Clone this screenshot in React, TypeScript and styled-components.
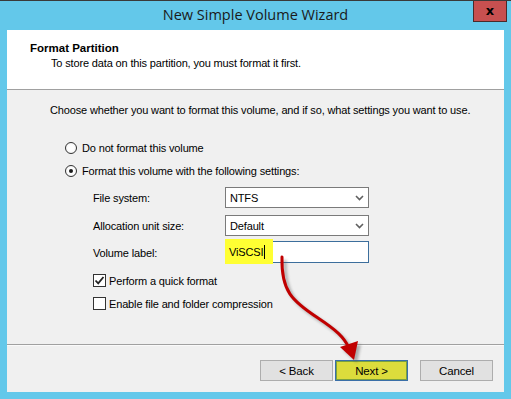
import React from "react";
import styled, { createGlobalStyle } from "styled-components";

const Global = createGlobalStyle`
  html, body { margin: 0; padding: 0; background: #63c8ea; }
  body { font-family: "Liberation Sans", Arial, sans-serif; }
  * { box-sizing: border-box; }
`;

const Frame = styled.div`
  position: relative;
  width: 511px;
  height: 399px;
  background: #63c8ea;
  border-top: 1px solid #3a3a3a;
  display: flex;
  flex-direction: column;
  overflow: hidden;
`;

const TitleBar = styled.div`
  height: 29px;
  display: grid;
  grid-template-columns: 1fr auto 1fr;
  align-items: start;
`;

const Title = styled.div`
  grid-column: 2;
  font-family: "Open Sans", "Liberation Sans", sans-serif;
  font-size: 14.5px;
  color: #1a1a1a;
  line-height: 28px;
`;

const CloseButton = styled.div`
  grid-column: 3;
  justify-self: end;
  margin-right: 4px;
  margin-top: -1px;
  width: 34px;
  height: 22px;
  background: #c75050;
  border: 1px solid #4a2a2a;
  border-top: none;
  display: flex;
  align-items: center;
  justify-content: center;
  color: #000;
  font-weight: bold;
  font-size: 13px;
  font-family: "DejaVu Sans", sans-serif;
`;

const Client = styled.div`
  margin: 0 7px;
  height: 362px;
  background: #f0f0f0;
  display: flex;
  flex-direction: column;
  font-size: 11px;
  letter-spacing: -0.15px;
  color: #000;
  white-space: nowrap;
`;

const Header = styled.div`
  height: 60px;
  background: #fff;
  border-bottom: 1px solid #a0a0a0;
  padding: 11px 0 0 23px;
`;

const HeaderTitle = styled.div`
  font-weight: bold;
  font-size: 11.5px;
  letter-spacing: 0;
  line-height: 15px;
  color: #000;
`;

const HeaderSub = styled.div`
  margin-left: 21px;
  line-height: 15px;
`;

const Body = styled.div`
  height: 255px;
  border-bottom: 1px solid #a0a0a0;
  padding: 12px 0 0 43px;
  display: flex;
  flex-direction: column;
`;

const Intro = styled.div`
  line-height: 16px;
  margin-bottom: 24px;
`;

const RadioRow = styled.label`
  display: flex;
  align-items: center;
  gap: 5px;
  height: 12px;
  margin-left: 15px;
  margin-bottom: 11px;
`;

const RadioCircle = styled.span<{ $on?: boolean }>`
  width: 12px;
  height: 12px;
  border-radius: 50%;
  border: 1px solid #333;
  background: radial-gradient(circle, #ffffff 40%, #eaeaea 100%);
  display: flex;
  align-items: center;
  justify-content: center;
  &::after {
    content: "";
    width: 4px;
    height: 4px;
    border-radius: 50%;
    background: ${(p) => (p.$on ? "#1a1a1a" : "transparent")};
  }
`;

const Settings = styled.div`
  margin-left: 43px;
  margin-top: -1px;
  display: grid;
  grid-template-columns: 132px 144px;
  row-gap: 7px;
  align-items: center;
`;

const FieldLabel = styled.div``;

const Select = styled.div`
  height: 21px;
  border: 1px solid #7a7a7a;
  background: #fff;
  display: flex;
  align-items: center;
  justify-content: space-between;
  padding: 0 4px 0 4px;
`;

const Input = styled.div`
  height: 22px;
  margin-top: -2px;
  border: 1px solid #3c6e9c;
  background: #fff;
  display: flex;
  align-items: center;
  position: relative;
`;

const Highlight = styled.span`
  position: absolute;
  left: -1px;
  top: -3px;
  width: 48px;
  height: 25px;
  background: #ffff33;
`;

const InputText = styled.span`
  position: relative;
  padding-left: 3px;
  display: flex;
  align-items: center;
`;

const Caret = styled.span`
  display: inline-block;
  width: 1px;
  height: 14px;
  background: #000;
  margin-left: 1px;
`;

const Checks = styled.div`
  margin-left: 43px;
  margin-top: 11px;
  display: flex;
  flex-direction: column;
  gap: 10px;
`;

const CheckRow = styled.label`
  display: flex;
  align-items: center;
  gap: 3px;
  height: 13px;
`;

const CheckBox = styled.span`
  width: 13px;
  height: 13px;
  border: 1px solid #333;
  background: #fff;
  display: flex;
  align-items: center;
  justify-content: center;
`;

const Footer = styled.div`
  flex: 1;
  display: flex;
  justify-content: flex-end;
  align-items: flex-start;
  padding: 14px 11px 0 0;
  border-top: 1px solid #fafafa;
`;

const Button = styled.div<{ $primary?: boolean; $gap?: number }>`
  width: 73px;
  height: 21px;
  margin-left: ${(p) => p.$gap ?? 0}px;
  display: flex;
  align-items: center;
  justify-content: center;
  background: ${(p) => (p.$primary ? "#dcdc3c" : "#e1e1e1")};
  border: 1px solid ${(p) => (p.$primary ? "#3a6fa8" : "#adadad")};
  box-shadow: ${(p) => (p.$primary ? "inset 0 0 0 1px #7aa040" : "none")};
  font-size: 11.5px;
  color: #000;
`;

const Overlay = styled.svg`
  position: absolute;
  left: 0;
  top: 0;
  pointer-events: none;
`;

const Chevron = () => (
  <svg width="9" height="6" viewBox="0 0 9 6">
    <path d="M1 1 L4.5 4.5 L8 1" fill="none" stroke="#606060" strokeWidth="1.6" />
  </svg>
);

export default function App() {
  return (
    <>
      <Global />
      <Frame>
        <TitleBar>
          <Title>New Simple Volume Wizard</Title>
          <CloseButton>x</CloseButton>
        </TitleBar>
        <Client>
          <Header>
            <HeaderTitle>Format Partition</HeaderTitle>
            <HeaderSub>To store data on this partition, you must format it first.</HeaderSub>
          </Header>
          <Body>
            <Intro>
              Choose whether you want to format this volume, and if so, what settings you want to use.
            </Intro>
            <RadioRow>
              <RadioCircle />
              Do not format this volume
            </RadioRow>
            <RadioRow>
              <RadioCircle $on />
              Format this volume with the following settings:
            </RadioRow>
            <Settings>
              <FieldLabel>File system:</FieldLabel>
              <Select>
                NTFS
                <Chevron />
              </Select>
              <FieldLabel>Allocation unit size:</FieldLabel>
              <Select>
                Default
                <Chevron />
              </Select>
              <FieldLabel>Volume label:</FieldLabel>
              <Input>
                <Highlight />
                <InputText>
                  ViSCSI
                  <Caret />
                </InputText>
              </Input>
            </Settings>
            <Checks>
              <CheckRow>
                <CheckBox>
                  <svg width="11" height="11" viewBox="0 0 11 11">
                    <path d="M1.5 5.5 L4.2 8.3 L9.5 2" fill="none" stroke="#222" strokeWidth="1.8" />
                  </svg>
                </CheckBox>
                Perform a quick format
              </CheckRow>
              <CheckRow>
                <CheckBox />
                Enable file and folder compression
              </CheckRow>
            </Checks>
          </Body>
          <Footer>
            <Button>&lt; Back</Button>
            <Button $primary $gap={2}>Next &gt;</Button>
            <Button $gap={12}>Cancel</Button>
          </Footer>
        </Client>
        <Overlay width="511" height="399" viewBox="0 0 511 399">
          <defs>
            <filter id="sh" x="-20%" y="-20%" width="140%" height="140%">
              <feGaussianBlur stdDeviation="1.6" />
            </filter>
          </defs>
          <g transform="translate(3,3)" opacity="0.45" filter="url(#sh)">
            <path d="M282 256 C 281 290, 292 300, 318 317 C 336 329, 344 336, 349 347" fill="none" stroke="#555" strokeWidth="3" />
            <polygon points="340,346 358,340 354,359" fill="#555" />
          </g>
          <path d="M282 256 C 281 290, 292 300, 318 317 C 336 329, 344 336, 349 347" fill="none" stroke="#c00000" strokeWidth="3" strokeLinecap="round" />
          <polygon points="340,346 358,340 354,359" fill="#c00000" />
        </Overlay>
      </Frame>
    </>
  );
}
